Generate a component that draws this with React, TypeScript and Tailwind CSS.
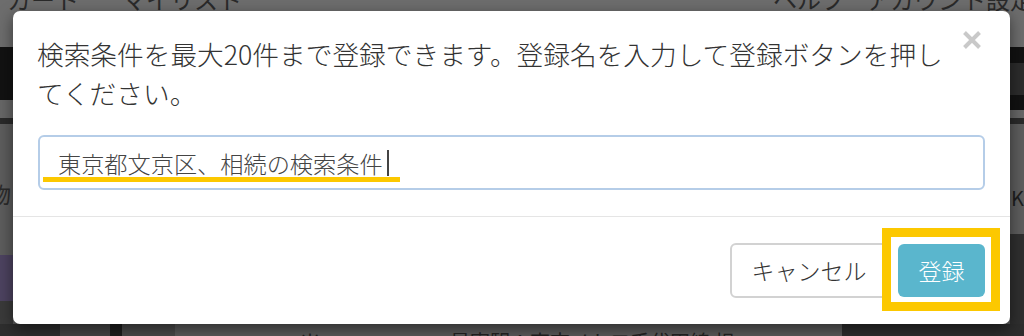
import { useState } from 'react';

const jp = { fontFamily: '"Noto Sans CJK JP", "Noto Sans", sans-serif' };

function CloseIcon() {
  return (
    <svg width="20" height="20" viewBox="0 0 20 20">
      <path d="M2.5 2.5 L17.5 17.5 M17.5 2.5 L2.5 17.5" stroke="#c9c9c9" strokeWidth="4" strokeLinecap="butt" />
    </svg>
  );
}

export default function App() {
  const [name, setName] = useState('東京都文京区、相続の検索条件');

  return (
    <div className="relative w-[1024px] h-[336px] overflow-hidden bg-[#5d5d5d]" style={jp}>
      {/* dimmed page behind the dialog */}
      <div className="flex flex-col h-full">
        <div className="h-[47px] bg-[#6d6d6d] flex items-start text-[24px] leading-[24px] text-[#2a2a2a] whitespace-nowrap overflow-hidden">
          <span className="ml-[7px] mt-[-13px]">カート</span>
          <span className="ml-[43px] mt-[-13px]">マイリスト</span>
          <span className="ml-auto mt-[-13px]">ヘルプ</span>
          <span className="ml-[21px] mr-[-10px] mt-[-13px]">アカウント設定</span>
        </div>
        <div className="h-[53px] bg-[#121212] flex justify-end">
          <div className="w-[14px] mt-[16px] h-[32px] bg-[#2c2c2c]" />
        </div>
        <div className="h-[18px] bg-[#676767] flex justify-end">
          <div className="w-[14px] h-[10px] bg-[#111]" />
        </div>
        <div className="h-[6px] bg-[#2a2a2a]" />
        <div className="flex-1 flex justify-between">
          <div className="w-[13px] flex flex-col overflow-hidden">
            <span className="mt-[58px] ml-[-11px] text-[22px] leading-[22px] text-[#2b2b2b]">物</span>
            <div className="mt-[51px] h-[46px] bg-[#4d4360]" />
            <div className="flex-1 bg-[#3a3a3a]" />
          </div>
          <div className="w-[14px] flex flex-col overflow-hidden">
            <span className="mt-[64px] ml-[1px] text-[20px] leading-[20px] text-[#1e1e1e]">K</span>
            <div className="mt-[26px] flex-1 bg-[#2f2f2f]" />
          </div>
        </div>
        <div className="h-[12px] flex overflow-hidden text-[20px] leading-[20px] text-[#222] whitespace-nowrap">
          <div className="w-[60px] bg-[#2e2e2e]" />
          <div className="w-[50px] bg-[#454545]" />
          <div className="w-[12px] bg-[#1d1d1d]" />
          <div className="w-[53px] bg-[#4a4a4a]" />
          <div className="flex-1 bg-[#5b5b5b] flex">
            <span className="ml-[125px] mt-[9px]">米</span>
            <span className="ml-[130px] mt-[8px]">最寄駅：東京メトロ千代田線 根</span>
          </div>
          <div className="w-[182px] bg-[#2d2d2d]" />
        </div>
      </div>

      {/* dialog */}
      <div className="absolute left-[13px] top-[11px] w-[997px] h-[313px] rounded-[7px] bg-white shadow-[0_5px_15px_rgba(0,0,0,0.5)] font-light">
        <div className="px-[25px] pt-[23px] pb-[26px]">
          <div className="flex justify-between items-start">
            <p className="w-[920px] ml-[-1px] text-[26.7px] leading-[39px] text-[#333]">
              検索条件を最大20件まで登録できます。登録名を入力して登録ボタンを押してください。
            </p>
            <button className="mt-[-4px] mr-[3px] w-[20px] h-[20px]">
              <CloseIcon />
            </button>
          </div>

          <div className="relative mt-[23px] h-[55px] rounded-[6px] border-2 border-[#b5cde8] flex items-center pl-[18px]">
            <input
              value={name}
              onChange={(e) => setName(e.target.value)}
              className="w-[329px] bg-transparent outline-none text-[23.2px] leading-[30px] text-[#444] font-light"
              style={jp}
            />
            <span className="w-[1.5px] h-[26px] bg-[#444]" />
            {/* highlight annotation */}
            <span className="absolute left-[3px] top-[40px] w-[357px] h-[5px] bg-[#fcc800]" />
          </div>
        </div>

        <div className="h-px bg-[#e5e5e5]" />

        <div className="flex justify-end items-center gap-[10px] pt-[26px] pr-[25px]">
          <button className="w-[158px] h-[55px] rounded-[6px] border-2 border-[#d2d2d2] bg-white text-[23px] text-[#333] flex items-center justify-center">
            キャンセル
          </button>
          <div className="relative">
            <span className="absolute -left-[16px] -right-[15px] -top-[16px] -bottom-[14px] border-[9px] border-[#fcc800]" />
            <button className="relative w-[87px] h-[53px] rounded-[6px] bg-[#5ab6cd] text-[23px] text-white flex items-center justify-center">
              登録
            </button>
          </div>
        </div>
      </div>
    </div>
  );
}
